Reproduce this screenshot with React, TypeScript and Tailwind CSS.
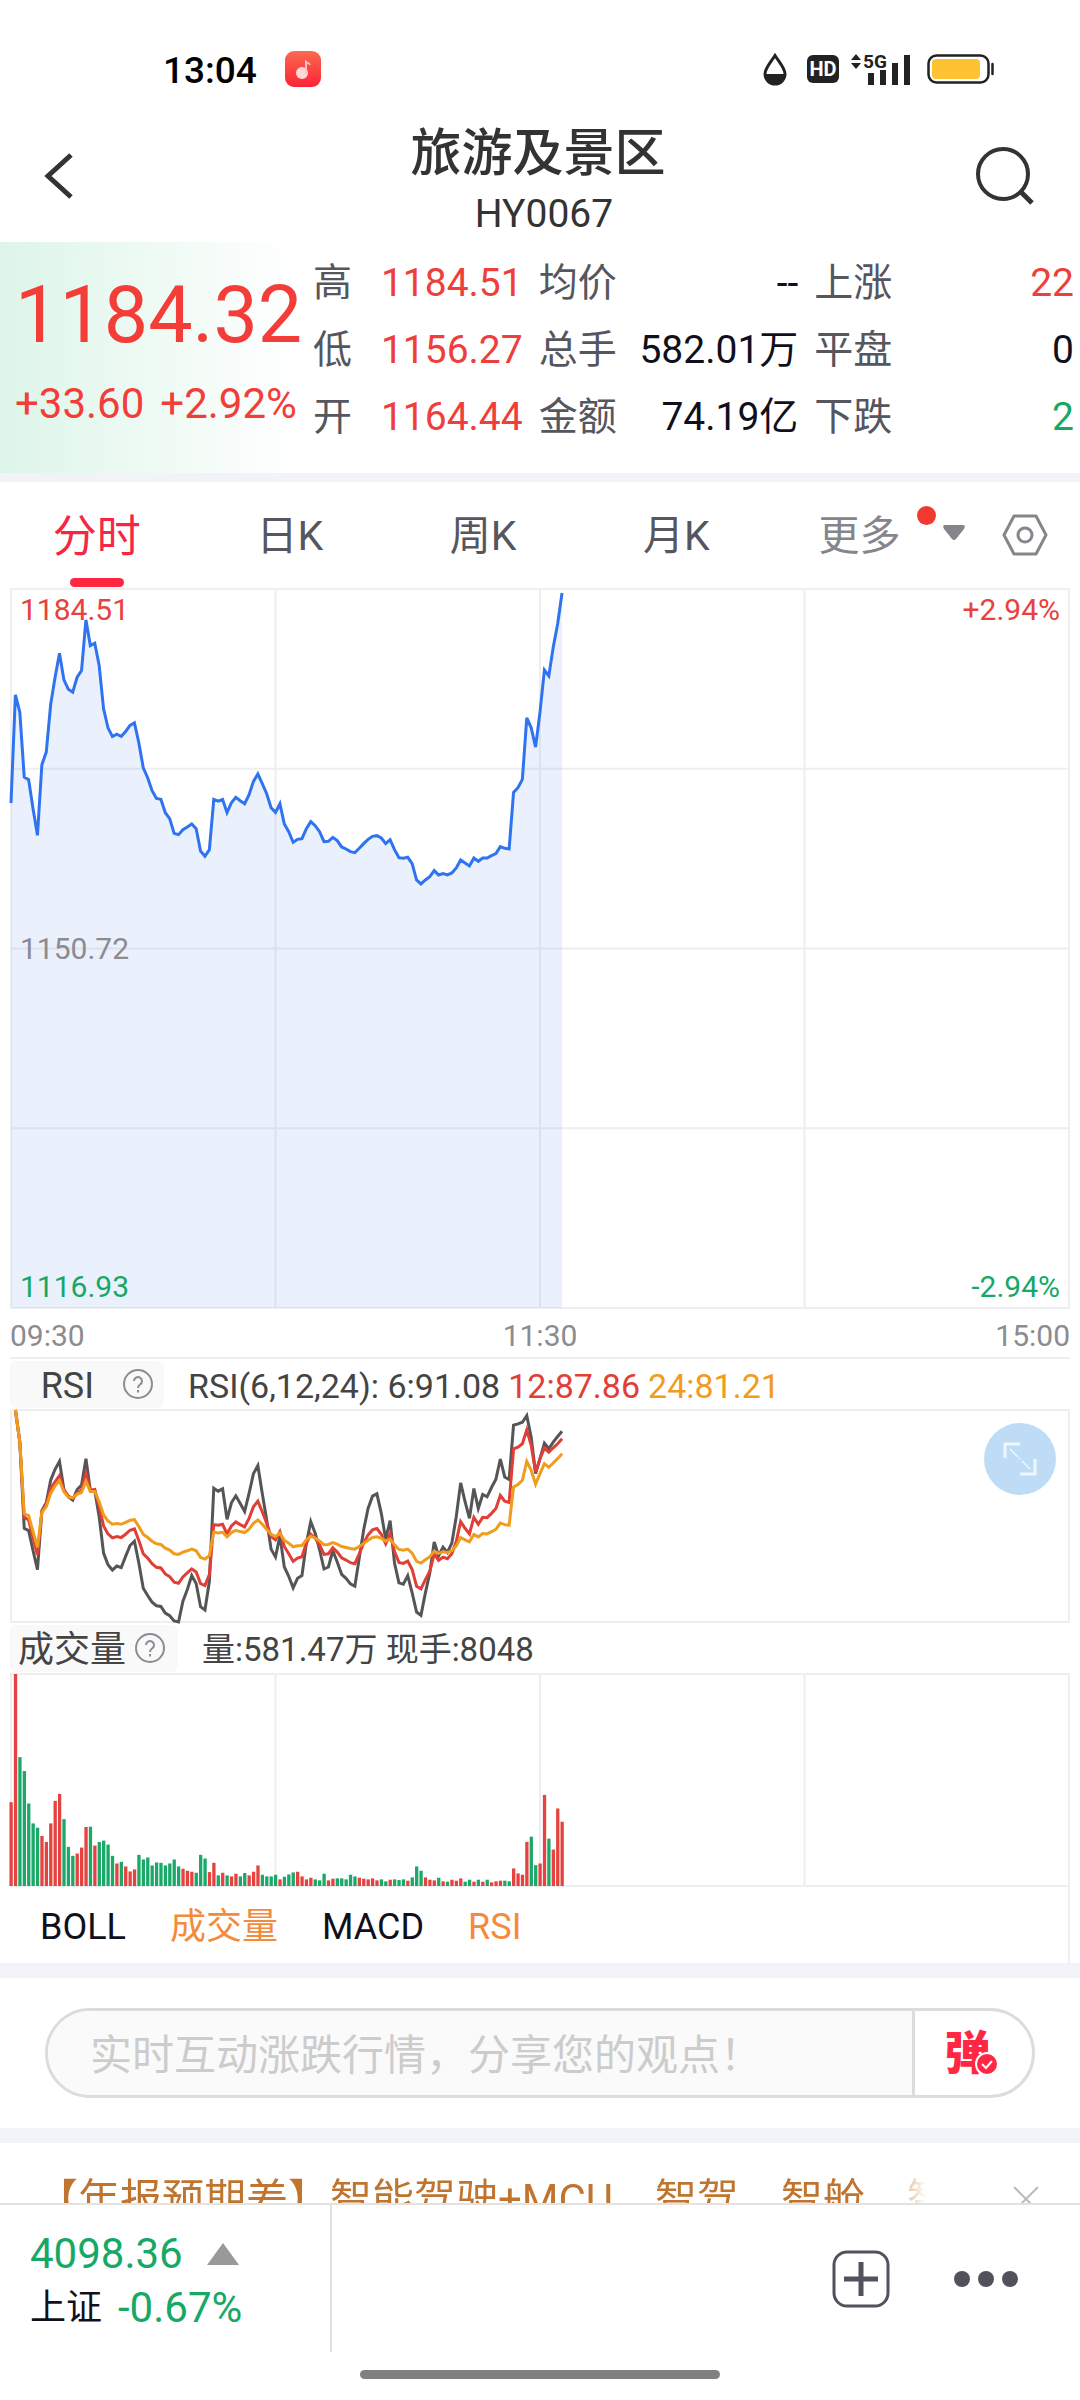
import clsx from "clsx";
import { useState } from "react";

// One trading day is 240 minutes, every series holds one value per minute.
const MINUTES = 240;

// Distance from the top of the plot, in plot units.
const priceSeries = [
  643, 318, 370, 565, 573, 660, 740, 528, 490, 347, 265, 193, 273, 301, 310, 265, 245, 93, 170, 163, 230, 360, 417, 443, 436, 443, 428,
  410, 402, 462, 537, 567, 606, 629, 632, 672, 690, 734, 738, 723, 715, 706, 720, 787, 803, 783, 632, 637, 632, 672, 642, 626, 636, 645,
  618, 578, 556, 585, 615, 657, 671, 645, 706, 729, 761, 752, 750, 720, 699, 711, 729, 759, 758, 746, 756, 775, 781, 789, 792, 779, 765,
  752, 743, 741, 748, 765, 753, 783, 807, 809, 806, 825, 874, 886, 874, 864, 846, 859, 855, 859, 853, 838, 814, 823, 832, 808, 818, 808,
  808, 801, 795, 774, 779, 781, 611, 597, 572, 387, 417, 475, 370, 243, 261, 175, 105, 12,
];

const rsi6Series = [
  0, 97, 357, 364, 424, 482, 304, 280, 212, 179, 155, 240, 262, 272, 240, 227, 147, 244, 244, 322, 432, 467, 483, 471, 476, 442, 409, 396,
  462, 538, 560, 580, 591, 593, 613, 621, 637, 640, 577, 542, 500, 524, 594, 604, 517, 236, 245, 238, 330, 280, 259, 282, 306, 252, 192,
  168, 252, 332, 420, 444, 380, 474, 502, 537, 508, 500, 402, 337, 372, 422, 480, 474, 425, 459, 496, 508, 525, 532, 447, 362, 297, 260,
  253, 312, 390, 334, 462, 522, 526, 500, 552, 610, 620, 552, 492, 398, 440, 414, 430, 402, 322, 220, 277, 327, 237, 297, 255, 262, 234,
  209, 148, 202, 210, 46, 42, 37, 17, 82, 192, 147, 100, 117, 97, 80, 64,
];

const rsi12Series = [
  0, 97, 324, 332, 387, 437, 307, 285, 237, 217, 198, 242, 260, 267, 252, 242, 192, 242, 240, 292, 350, 374, 386, 382, 385, 375, 363, 359,
  394, 434, 447, 464, 475, 477, 495, 503, 520, 523, 504, 492, 480, 489, 524, 530, 497, 346, 348, 345, 374, 350, 338, 346, 353, 327, 292,
  275, 307, 342, 382, 392, 367, 412, 434, 457, 447, 443, 402, 375, 387, 407, 436, 434, 416, 429, 446, 453, 461, 464, 434, 402, 377, 362,
  358, 375, 404, 374, 427, 460, 463, 456, 482, 532, 540, 512, 487, 435, 454, 444, 449, 434, 397, 337, 357, 374, 324, 345, 324, 325, 312,
  297, 258, 275, 279, 117, 112, 102, 60, 107, 187, 147, 115, 127, 114, 102, 87,
];

const rsi24Series = [
  0, 97, 314, 319, 367, 415, 309, 292, 252, 229, 213, 247, 263, 265, 254, 249, 215, 246, 246, 277, 317, 335, 345, 343, 345, 339, 333, 331,
  352, 375, 385, 396, 404, 406, 417, 423, 434, 436, 429, 425, 420, 425, 445, 450, 440, 369, 371, 369, 383, 370, 363, 367, 370, 360, 342,
  332, 345, 360, 375, 382, 372, 393, 402, 413, 410, 409, 392, 381, 387, 395, 407, 406, 400, 405, 412, 415, 418, 420, 412, 403, 393, 385,
  383, 387, 396, 390, 407, 421, 423, 420, 432, 457, 462, 452, 443, 426, 433, 428, 430, 425, 410, 385, 392, 398, 376, 383, 373, 374, 367,
  360, 341, 346, 348, 232, 225, 212, 155, 182, 224, 192, 162, 173, 160, 147, 132,
];

// Bar heights, negative when the minute closed lower.
const volumeSeries = [
  253, 640, -389, -347, -249, -189, -176, 151, 133, 189, 257, 278, -202, -118, -91, 98, 116, 178, -179, 122, -133, -137, -125, -91, 68, -73,
  59, 44, 50, -94, -80, -86, -62, -71, -70, -62, -68, -80, -59, 52, 46, 43, -40, -94, -83, 42, 70, -32, 40, -32, 29, 37, -29, -39, 32, 43,
  62, -34, -29, -29, -34, 20, -28, -35, -41, 43, 29, 20, 25, -20, -17, -37, 17, 22, -23, -23, -20, -34, -29, 25, 22, 20, 23, 17, -20, -14,
  19, -20, -18, -20, 16, -26, -59, -46, 26, 19, 17, -25, 14, -13, 19, 16, 23, -13, -19, 13, -19, 13, -19, 11, 14, 16, -16, -14, 53, 38, 34,
  133, -149, -63, 68, 275, -143, 110, 234, 194,
];

const stats = [
  { label: "高", value: "1184.51", color: "text-[#ee3f3b]" },
  { label: "均价", value: "--", color: "text-[#10101c]" },
  { label: "上涨", value: "22", color: "text-[#ee3f3b]" },
  { label: "低", value: "1156.27", color: "text-[#ee3f3b]" },
  { label: "总手", value: "582.01万", color: "text-[#10101c]" },
  { label: "平盘", value: "0", color: "text-[#10101c]" },
  { label: "开", value: "1164.44", color: "text-[#ee3f3b]" },
  { label: "金额", value: "74.19亿", color: "text-[#10101c]" },
  { label: "下跌", value: "2", color: "text-[#17a866]" },
];

const periods = ["分时", "日K", "周K", "月K"];
const indicators = ["BOLL", "成交量", "MACD", "RSI"];

const toPoints = (series: number[], start = 0) => series.map((y, i) => `${i + start},${y}`).join(" ");

const StatusBar = () => (
  <div className="flex h-[138px] shrink-0 items-start justify-between pt-[51px] pr-[86px] pl-[163px]">
    <div className="flex h-9 items-center gap-7">
      <span className="pt-1 text-[37px] leading-9 font-medium text-black">13:04</span>
      <svg className="size-9" viewBox="0 0 36 36">
        <defs>
          <linearGradient id="music" x1="0" y1="0" x2="0" y2="1">
            <stop offset="0" stopColor="#fb6a50" />
            <stop offset="1" stopColor="#fd2336" />
          </linearGradient>
        </defs>
        <rect width="36" height="36" rx="9" fill="url(#music)" />
        <circle cx="17" cy="22" r="6" fill="#ffd9d6" />
        <path d="M20 8c1 3 5 3 6 6-2 0-3-1-4-1v10h-2z" fill="#ffc4bd" />
      </svg>
    </div>
    <div className="flex h-9 items-center">
      <svg className="mr-5 h-[33px] w-6" viewBox="0 0 24 33">
        <path d="M12 2.5C8 9 2 15 2 21a10 10 0 0 0 20 0C22 15 16 9 12 2.500z" fill="none" stroke="#222" strokeWidth="3" />
        <path d="M2 21h20a10 10 0 0 1-20 0z" fill="#222" />
      </svg>
      <span className="mr-3 flex h-7 w-8 items-center justify-center rounded-md bg-[#222] text-[20px] font-bold text-white">HD</span>
      <svg className="mr-4 h-[33px] w-[60px] overflow-visible" viewBox="0 0 60 33">
        <path d="M0 7l5-6 5 6zM0 10l5 6 5-6z" fill="#222" />
        <path d="M17 20h6v12h-6zM29 17h6v15h-6zM41 10h6v22h-6zM53 2h6v30h-6z" fill="#222" />
        <text x="12" y="15" fontSize="19" fontWeight="700" fill="#222">
          5G
        </text>
      </svg>
      <svg className="h-[30px] w-[67px]" viewBox="0 0 67 30">
        <rect x="1.500" y="1.500" width="60" height="27" rx="8" fill="none" stroke="#222" strokeWidth="2.500" />
        <rect x="5" y="5" width="48" height="20" rx="4" fill="#ffc233" />
        <path d="M65.500 10v10" stroke="#222" strokeWidth="2.500" strokeLinecap="round" />
      </svg>
    </div>
  </div>
);

const HelpIcon = () => (
  <svg className="size-8" viewBox="0 0 32 32" fill="none" stroke="#8b8b93" strokeWidth="2">
    <circle cx="16" cy="16" r="14" />
    <path d="M12 13a4 4 0 1 1 6 3.500c-1.500 1-2 1.500-2 3.500" />
    <path d="M16 22v2.500" />
  </svg>
);

const GridLines = ({ height, rows }: { height: number; rows: boolean }) => (
  <g stroke="#eeeef0" strokeWidth="2">
    {[60, 120, 180].map((x) => (
      <path key={x} d={`M${x} 0V${height}`} vectorEffect="non-scaling-stroke" />
    ))}
    {rows && [0.25, 0.5, 0.75].map((r) => <path key={r} d={`M0 ${height * r}H${MINUTES}`} vectorEffect="non-scaling-stroke" />)}
  </g>
);

const PriceChart = () => (
  <div className="relative h-[721px] border-2 border-[#efeff1] text-[30px] leading-8">
    <svg className="absolute -inset-px size-[calc(100%+2px)] overflow-visible" viewBox="0 0 240 2160" preserveAspectRatio="none">
      <GridLines height={2160} rows />
      <polygon points={`0,2160 ${toPoints(priceSeries)} 125,2160`} fill="#2f73f0" fillOpacity="0.1" />
      <polyline points={toPoints(priceSeries)} fill="none" stroke="#2f73f0" strokeWidth="3" vectorEffect="non-scaling-stroke" />
    </svg>
    <span className="absolute top-1 left-2 text-[#e8413e]">1184.51</span>
    <span className="absolute top-1 right-2 text-[#e8413e]">+2.94%</span>
    <span className="absolute top-1/2 left-2 -translate-y-1/2 text-[#8b8b90]">1150.72</span>
    <span className="absolute bottom-1 left-2 text-[#17a866]">1116.93</span>
    <span className="absolute right-2 bottom-1 text-[#17a866]">-2.94%</span>
  </div>
);

const RsiChart = () => (
  <div className="relative h-[214px] border-2 border-[#efeff1]">
    <svg
      className="absolute -inset-px size-[calc(100%+2px)] overflow-visible"
      viewBox="0 0 240 640"
      preserveAspectRatio="none"
      fill="none"
      strokeWidth="3"
    >
      <polyline points={toPoints(rsi6Series, 1)} stroke="#555" vectorEffect="non-scaling-stroke" />
      <polyline points={toPoints(rsi12Series, 1)} stroke="#e03e36" vectorEffect="non-scaling-stroke" />
      <polyline points={toPoints(rsi24Series, 1)} stroke="#f09c1c" vectorEffect="non-scaling-stroke" />
    </svg>
    <button
      type="button"
      aria-label="全屏"
      className="absolute top-3 right-3 flex size-[72px] items-center justify-center rounded-full bg-[#bfdcf6]"
    >
      <svg className="size-9" viewBox="0 0 36 36" fill="none" stroke="#eef7ff">
        <path d="M3 17V3h15M33 18v15H18" strokeWidth="3" />
        <path d="M8 8l8 8M20 20l8 8" strokeWidth="1.500" />
        <path d="M17 17l1 1" strokeWidth="2" />
      </svg>
    </button>
  </div>
);

const VolumeChart = () => (
  <div className="relative h-[214px] border-2 border-[#efeff1]">
    <svg className="absolute -inset-px size-[calc(100%+2px)] overflow-visible" viewBox="0 0 240 640" preserveAspectRatio="none">
      <GridLines height={640} rows={false} />
      {volumeSeries.map((v, i) => (
        <rect key={i} x={i - 0.35} y={640 - Math.abs(v)} width="0.75" height={Math.abs(v)} fill={v > 0 ? "#e5433f" : "#1ba869"} />
      ))}
    </svg>
  </div>
);

const App = () => {
  const [period, setPeriod] = useState("分时");
  const [active, setActive] = useState(["成交量", "RSI"]);

  const toggleIndicator = (name: string) => {
    setActive(active.includes(name) ? active.filter((n) => n !== name) : [...active, name]);
  };

  return (
    <div className="flex h-screen flex-col overflow-hidden bg-white font-[Roboto,'Noto_Sans_CJK_SC',sans-serif] text-[#333]">
      <StatusBar />
      <main className="-mt-7 min-h-0 flex-1 overflow-hidden">
        <header className="grid h-[132px] grid-cols-[1fr_auto_1fr] items-center pr-10 pl-9">
          <button type="button" aria-label="返回" className="flex size-12 items-center justify-center">
            <svg className="size-12" viewBox="0 0 48 48" fill="none" stroke="#333" strokeWidth="5">
              <path d="M35 3L12 24l23 21" />
            </svg>
          </button>
          <div className="pt-2 text-center">
            <h1 className="text-[51px] leading-[68px] font-medium">旅游及景区</h1>
            <p className="pl-3 text-[39px] leading-[52px]">HY0067</p>
          </div>
          <button type="button" aria-label="搜索" className="flex size-16 items-center justify-center justify-self-end">
            <svg className="size-16" viewBox="0 0 64 64" fill="none" stroke="#333" strokeWidth="4">
              <circle cx="27" cy="30" r="25" />
              <path d="M45 48l11 11" strokeWidth="5" />
            </svg>
          </button>
        </header>

        <section className="flex h-[231px]">
          <div className="w-[313px] shrink-0 bg-linear-to-r from-[#ddf5e9] to-white to-95% pt-[30px] pl-[15px] whitespace-nowrap text-[#f33d39]">
            <p className="text-[79px] leading-[86px]">1184.32</p>
            <p className="mt-4 flex gap-4 text-[42px] leading-[60px]">
              <span>+33.60</span>
              <span>+2.92%</span>
            </p>
          </div>
          <dl className="grid flex-1 auto-rows-[67px] grid-cols-[210fr_260fr_260fr] gap-x-4 pt-2 pr-1.5 text-[39px]">
            {stats.map((s) => (
              <div key={s.label} className="flex items-center justify-between whitespace-nowrap">
                <dt className="text-[#55565e]">{s.label}</dt>
                <dd className={s.color}>{s.value}</dd>
              </div>
            ))}
          </dl>
        </section>
        <div className="h-[9px] bg-[#f1f3f8]" />

        <nav className="flex h-[106px]">
          {periods.map((p) => (
            <button
              key={p}
              type="button"
              onClick={() => setPeriod(p)}
              className={clsx(
                "relative flex flex-[194] items-center justify-center pt-1",
                p === period ? "text-[44px] text-[#f52744]" : "text-[41px] text-[#55565e]",
              )}
            >
              {p}
              {p === period && <span className="absolute bottom-px h-[9px] w-[54px] rounded-full bg-[#ff2642]" />}
            </button>
          ))}
          <button type="button" className="relative flex flex-[194] items-center justify-end gap-[42px] pt-1 pr-1 text-[41px] text-[#85858c]">
            更多
            <svg className="mb-2 h-4 w-6" viewBox="0 0 24 16" fill="#85858c">
              <path d="M3 0h18q3 0 1 4l-8 10q-2 2-4 0L2 4Q0 0 3 0z" />
            </svg>
            <span className="absolute top-6 right-[34px] size-[19px] rounded-full bg-[#f03a30]" />
          </button>
          <button type="button" aria-label="设置" className="flex flex-[110] items-center justify-center">
            <svg className="h-[42px] w-[46px]" viewBox="0 0 46 42" fill="none" stroke="#85858c" strokeWidth="3">
              <path d="M12 2h22l10 19-10 19H12L2 21z" strokeLinejoin="round" />
              <circle cx="23" cy="21" r="7" />
            </svg>
          </button>
        </nav>

        <div className="px-2.5">
          <PriceChart />
          <div className="flex h-[50px] items-center justify-between border-b-2 border-[#efeff1] pt-1 text-[30px] text-[#8b8b90]">
            <span>09:30</span>
            <span>11:30</span>
            <span>15:00</span>
          </div>

          <div className="flex h-[50px] items-center">
            <button type="button" className="flex h-[47px] w-[154px] items-center justify-end gap-7 rounded-md bg-[#f9f9f9] pr-2.5 text-[36px] text-[#444]">
              <span className="pt-1">RSI</span>
              <HelpIcon />
            </button>
            <p className="ml-6 flex gap-2 pt-1 text-[34px] whitespace-nowrap text-[#444]">
              <span>RSI(6,12,24): 6:91.08</span>
              <span className="text-[#e03e36]">12:87.86</span>
              <span className="text-[#f09c1c]">24:81.21</span>
            </p>
          </div>
          <RsiChart />

          <div className="flex h-[50px] items-center">
            <button type="button" className="flex h-[47px] items-center gap-2 rounded-md bg-[#f9f9f9] pr-3 pl-2 text-[36px] text-[#444]">
              <span className="pt-1">成交量</span>
              <HelpIcon />
            </button>
            <p className="ml-6 pt-1 text-[33px] text-[#444]">量:581.47万 现手:8048</p>
          </div>
          <VolumeChart />

          <div className="flex h-[76px] items-center gap-11 border-r-2 border-[#efeff1] pt-1 pl-[30px] text-[36px]">
            {indicators.map((name) => (
              <button
                key={name}
                type="button"
                onClick={() => toggleIndicator(name)}
                className={active.includes(name) ? "text-[#f58a3c]" : "text-[#10101c]"}
              >
                {name}
              </button>
            ))}
          </div>
        </div>
        <div className="h-[15px] bg-[#f1f3f8]" />

        <form className="px-[45px] py-[30px]" onSubmit={(e) => e.preventDefault()}>
          <div className="flex h-[90px] overflow-hidden rounded-full border-3 border-[#dcdcdc]">
            <input
              type="text"
              aria-label="发表观点"
              placeholder="实时互动涨跌行情，分享您的观点！"
              className="min-w-0 flex-1 bg-[#fafafa] pt-1 pl-[42px] text-[42px] outline-none placeholder:text-[#ccc]"
            />
            <button type="button" aria-label="弹幕" className="flex w-[120px] items-center justify-center border-l-3 border-[#dcdcdc]">
              <span className="relative mr-3 text-[46px] leading-none font-black text-[#ff2742]">
                弹
                <svg className="absolute -right-2 bottom-0 size-6" viewBox="0 0 24 24">
                  <circle cx="12" cy="12" r="11" fill="#ff2742" stroke="#fff" strokeWidth="2" />
                  <path d="M7 12l4 4 6-7" fill="none" stroke="#fff" strokeWidth="2" />
                </svg>
              </span>
            </button>
          </div>
        </form>
        <div className="h-[15px] bg-[#f1f3f8]" />

        <div className="flex h-28 items-center justify-between pr-10 pl-9">
          <a href="#news" className="w-[890px] overflow-hidden mask-r-from-95% text-[42px] whitespace-nowrap text-[#bf752f]">
            【年报预期差】智能驾驶+MCU、智驾、智舱、智能座舱
          </a>
          <button type="button" aria-label="关闭" className="flex size-7 items-center justify-center">
            <svg className="size-7" viewBox="0 0 28 28" stroke="#bbb" strokeWidth="2">
              <path d="M2 2l24 24M26 2L2 26" />
            </svg>
          </button>
        </div>
      </main>

      <footer className="shrink-0 border-t-2 border-[#e2e2e2] bg-white">
        <div className="flex h-[147px]">
          <button type="button" className="flex w-[332px] flex-col justify-center border-r-2 border-[#e2e2e2] pt-1 pl-[30px] text-[42px] leading-[54px] text-[#17a866]">
            <span className="flex items-center gap-6">
              4098.36
              <svg className="h-[22px] w-8" viewBox="0 0 32 22" fill="#999">
                <path d="M16 0l16 22H0z" />
              </svg>
            </span>
            <span className="flex items-center gap-4">
              <span className="text-[36px] text-[#10101c]">上证</span>
              -0.67%
            </span>
          </button>
          <div className="flex flex-1 items-center justify-end gap-16 pr-[62px]">
            <button type="button" aria-label="添加">
              <svg className="size-[58px]" viewBox="0 0 58 58" fill="none" stroke="#51525c">
                <rect x="2" y="2" width="54" height="54" rx="13" strokeWidth="3" />
                <path d="M29 12v34M12 29h34" strokeWidth="5" />
              </svg>
            </button>
            <button type="button" aria-label="更多操作">
              <svg className="h-4 w-16" viewBox="0 0 64 16" fill="#51525c">
                <circle cx="8" cy="8" r="8" />
                <circle cx="32" cy="8" r="8" />
                <circle cx="56" cy="8" r="8" />
              </svg>
            </button>
          </div>
        </div>
        <div className="flex h-12 justify-center pt-[18px]">
          <div className="h-[9px] w-1/3 rounded-full bg-[#808080]" />
        </div>
      </footer>
    </div>
  );
};

export default App;
